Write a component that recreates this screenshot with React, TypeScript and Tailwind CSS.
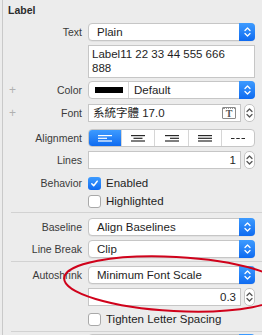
const Updown = ({ stroke = 'white' }: { stroke?: string }) => (
    <svg width="9" height="14" viewBox="0 0 9 14" fill="none">
        <path d="M2 5.5 L4.5 3 L7 5.5" stroke={stroke} strokeWidth="1.3" strokeLinecap="round" strokeLinejoin="round" />
        <path d="M2 8.5 L4.5 11 L7 8.5" stroke={stroke} strokeWidth="1.3" strokeLinecap="round" strokeLinejoin="round" />
    </svg>
);

const Popup = ({ value }: { value: string }) => (
    <div className="flex h-[18px] w-[167px] items-stretch rounded-[4px] border border-[#c6c6c6] bg-white shadow-[0_0.5px_0.5px_rgba(0,0,0,0.08)]">
        <span className="flex flex-1 items-center pl-[8px] text-[11.5px] leading-[14px] text-[#1e1e1e]">{value}</span>
        <span className="-m-px flex w-[16px] items-center justify-center rounded-r-[4px] bg-gradient-to-b from-[#3d9bff] to-[#0e6af0]">
            <Updown />
        </span>
    </div>
);

const SmallStepper = () => (
    <span className="flex h-[18px] w-[11px] items-center justify-center rounded-[5px] border border-[#c4c4c4] bg-white">
        <Updown stroke="#555" />
    </span>
);

const Field = ({ children, right }: { children: React.ReactNode; right?: boolean }) => (
    <div className="flex w-[167px] items-center gap-[3px]">
        <div className={`flex h-[18px] flex-1 items-center border border-[#c6c6c6] bg-white px-[4px] text-[11.5px] leading-[14px] text-[#1e1e1e] ${right ? 'justify-end' : ''}`}>
            {children}
        </div>
        <SmallStepper />
    </div>
);

const Row = ({ label, children, plus, className = '' }: { label?: string; children: React.ReactNode; plus?: boolean; className?: string }) => (
    <div className={`flex items-center ${className}`}>
        <span className="relative w-[80px] pr-[1px] text-right text-[10.5px] leading-[14px] text-[#3a3a3a]">
            {plus && <span className="absolute left-[6px] top-1/2 -translate-y-1/2 text-[12px] text-[#b0b0b0]">+</span>}
            {label}
        </span>
        <div className="ml-[5px]">{children}</div>
    </div>
);

const Check = ({ on, label }: { on?: boolean; label: string }) => (
    <span className="flex h-[13px] items-center gap-[5px]">
        {on ? (
            <span className="flex h-[13px] w-[13px] items-center justify-center rounded-[3px] bg-gradient-to-b from-[#3d9bff] to-[#0e6af0]">
                <svg width="9" height="9" viewBox="0 0 9 9" fill="none">
                    <path d="M1.8 4.8 L3.7 6.7 L7.2 2.2" stroke="white" strokeWidth="1.5" strokeLinecap="round" strokeLinejoin="round" />
                </svg>
            </span>
        ) : (
            <span className="h-[13px] w-[13px] rounded-[3px] border border-[#a9a9a9] bg-white" />
        )}
        <span className="text-[11.5px] leading-[13px] text-[#1e1e1e]">{label}</span>
    </span>
);

const AlignIcon = ({ kind, color }: { kind: string; color: string }) => {
    const lines: Array<[number, number]> =
        kind === 'left' ? [[0, 14], [0, 9], [0, 14]] :
        kind === 'center' ? [[0, 14], [2.5, 9], [0, 14]] :
        kind === 'right' ? [[0, 14], [5, 9], [0, 14]] :
        [[0, 14], [0, 14], [0, 14]];
    return (
        <svg width="14" height="7" viewBox="0 0 14 7">
            {kind === 'natural' ? (
                <path d="M0 3.5 H3.5 M5.25 3.5 H8.75 M10.5 3.5 H14" stroke={color} strokeWidth="1.2" />
            ) : (
                lines.map(([x, w], i) => <rect key={i} x={x} y={i * 2.7} width={w} height="1.2" fill={color} />)
            )}
        </svg>
    );
};

const Divider = ({ className = '' }: { className?: string }) => <div className={`ml-[8px] h-px bg-[#d2d2d2] ${className}`} />;

export default function App() {
    return (
        <div className="relative h-[335px] w-[262px] overflow-hidden bg-[#ececec] font-['Liberation_Sans','Noto_Sans_CJK_TC',sans-serif]">
            <div className="ml-[2px] h-full border-l border-[#c9c9c9]">
                <div className="pl-[5px] pt-[3px] text-[10.5px] font-bold leading-[14px] text-[#2c2c2c]">Label</div>

                <Row label="Text" className="mt-[6px]">
                    <Popup value="Plain" />
                </Row>

                <div className="ml-[85px] mt-[4px] h-[33px] w-[167px] border border-[#c6c6c6] bg-white px-[3px] pt-[1px] text-[11.5px] leading-[14px] text-[#1e1e1e]">
                    Label11 22 33 44 555 666
                    <br />
                    888
                </div>

                <Row label="Color" plus className="mt-[3px]">
                    <div className="flex h-[18px] w-[167px] items-stretch rounded-[4px] border border-[#c6c6c6] bg-white">
                        <span className="flex w-[40px] items-center justify-center border-r border-[#d6d6d6]">
                            <span className="h-[6px] w-[28px] bg-black" />
                        </span>
                        <span className="flex flex-1 items-center pl-[5px] text-[11.5px] leading-[14px] text-[#1e1e1e]">Default</span>
                        <span className="-m-px flex w-[16px] items-center justify-center rounded-r-[4px] bg-gradient-to-b from-[#3d9bff] to-[#0e6af0]">
                            <Updown />
                        </span>
                    </div>
                </Row>

                <Row label="Font" plus className="mt-[5px]">
                    <Field>
                        <span className="flex-1">系統字體 17.0</span>
                        <span className="flex h-[12px] w-[14px] flex-col items-center rounded-[1px] border border-[#8a8a8a] bg-white">
                            <span className="h-px w-full border-t border-dotted border-[#999]" />
                            <span className="font-['Liberation_Serif',serif] text-[10px] font-bold leading-[10px] text-[#555]">T</span>
                        </span>
                    </Field>
                </Row>

                <Row label="Alignment" className="mt-[7px]">
                    <div className="flex h-[18px] w-[167px] overflow-hidden rounded-[4px] border border-[#c6c6c6] bg-white">
                        {['left', 'center', 'right', 'justified', 'natural'].map((k, i) => (
                            <span
                                key={k}
                                className={`flex flex-1 items-center justify-center ${i === 0 ? 'bg-gradient-to-b from-[#3d9bff] to-[#0e6af0]' : 'border-l border-[#d6d6d6]'}`}
                            >
                                <AlignIcon kind={k} color={i === 0 ? 'white' : '#2a2a2a'} />
                            </span>
                        ))}
                    </div>
                </Row>

                <Row label="Lines" className="mt-[4px]">
                    <Field right>1</Field>
                </Row>

                <Row label="Behavior" className="mt-[7px]">
                    <Check on label="Enabled" />
                </Row>
                <div className="ml-[85px] mt-[5px]">
                    <Check label="Highlighted" />
                </div>

                <Divider className="mt-[4px]" />

                <Row label="Baseline" className="mt-[5px]">
                    <Popup value="Align Baselines" />
                </Row>
                <Row label="Line Break" className="mt-[4px]">
                    <Popup value="Clip" />
                </Row>

                <Divider className="mt-[3px]" />

                <Row label="Autoshrink" className="mt-[4px]">
                    <Popup value="Minimum Font Scale" />
                </Row>
                <div className="ml-[85px] mt-[4px]">
                    <Field right>0.3</Field>
                </div>
                <div className="ml-[85px] mt-[7px]">
                    <Check label="Tighten Letter Spacing" />
                </div>

                <Divider className="mt-[5px]" />

                <Row className="mt-[2px]">
                    <Popup value="" />
                </Row>
            </div>

            <svg className="pointer-events-none absolute inset-0" width="262" height="335" viewBox="0 0 262 335">
                <ellipse cx="175" cy="284" rx="111" ry="27" transform="rotate(3 175 284)" fill="none" stroke="#d0021b" strokeWidth="2" />
            </svg>
        </div>
    );
}
